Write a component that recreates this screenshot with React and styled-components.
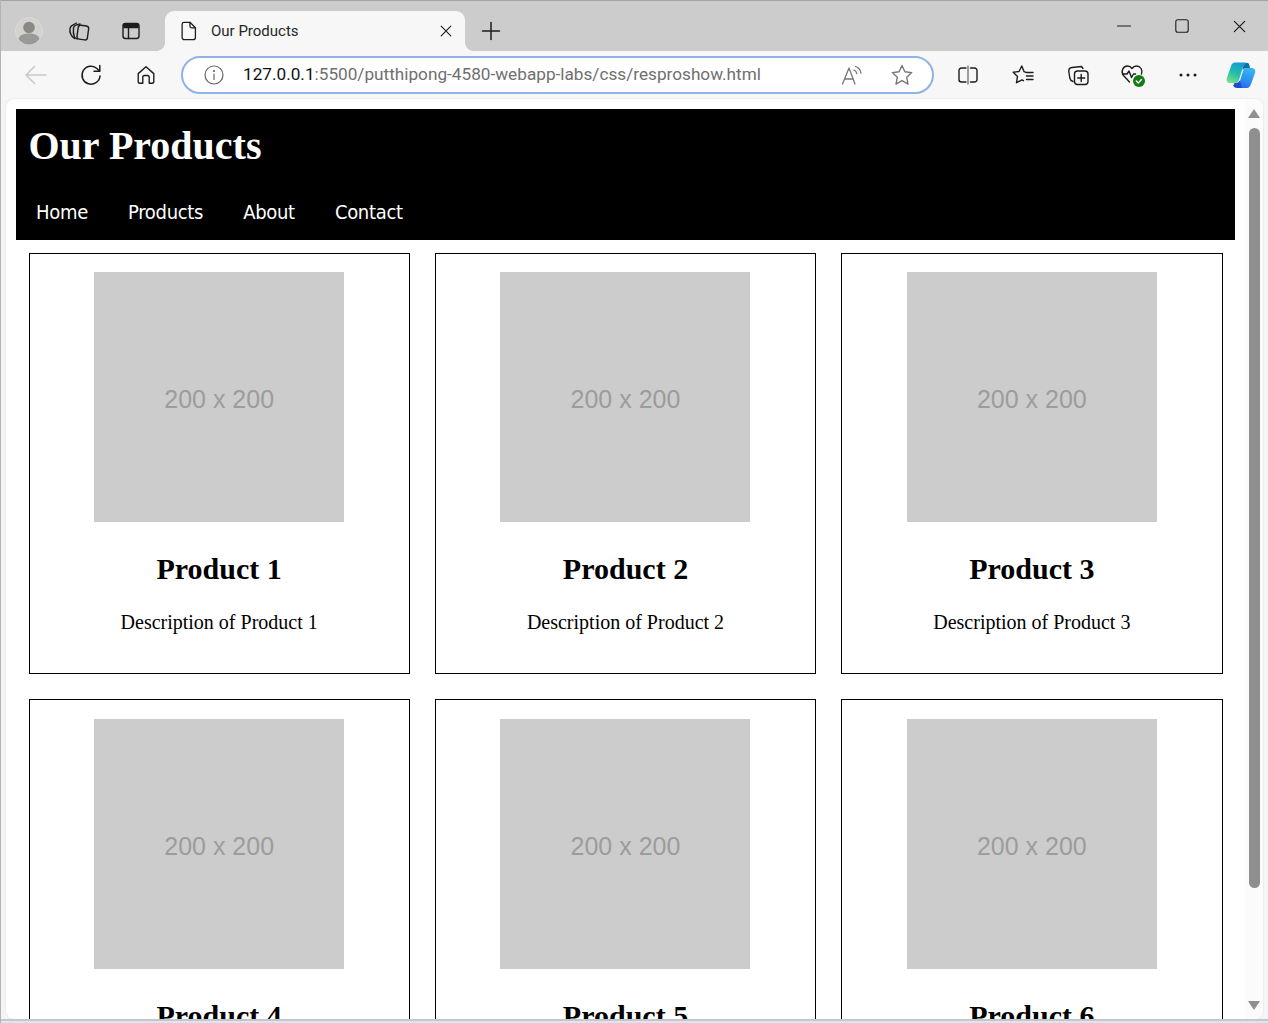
import styled, {createGlobalStyle} from 'styled-components';

const products = [1, 2, 3, 4, 5, 6];
const links = ['Home', 'Products', 'About', 'Contact'];

const GlobalStyle = createGlobalStyle`
    html, body {
        margin: 0;
        padding: 0;
        height: 100%;
        overflow: hidden;
        background: #f7f7f7;
    }
`;

const Browser = styled.div`
    height: 1023px;
    display: flex;
    flex-direction: column;
    overflow: hidden;
    background: #f5f5f5;
    border-left: 1px solid #b4b4b4;
    box-sizing: border-box;
    font-family: Roboto, "Open Sans", sans-serif;
`;

const TabStrip = styled.div`
    height: 51px;
    flex: none;
    box-sizing: border-box;
    margin-left: -1px;
    padding-left: 4px;
    display: flex;
    align-items: flex-end;
    background: #cccccc;
    border-top: 1px solid #a3a3a3;
`;

const StripButton = styled.div`
    width: ${props => props.$w || 50}px;
    height: 40px;
    flex: none;
    margin-left: ${props => props.$ml || 0}px;
    display: flex;
    align-items: center;
    justify-content: center;
    color: #1c1c1c;
`;

const Tab = styled.div`
    position: relative;
    width: 300px;
    height: 40px;
    flex: none;
    margin-left: 8px;
    box-sizing: border-box;
    padding: 0 12px 0 13px;
    display: flex;
    align-items: center;
    background: #f7f7f7;
    border-radius: 9px 9px 0 0;
    color: #1c1c1c;

    &::before, &::after {
        content: '';
        position: absolute;
        bottom: 0;
        width: 8px;
        height: 8px;
    }

    &::before {
        left: -8px;
        background: radial-gradient(circle at 0 0, transparent 7.5px, #f7f7f7 8px);
    }

    &::after {
        right: -8px;
        background: radial-gradient(circle at 100% 0, transparent 7.5px, #f7f7f7 8px);
    }
`;

const TabTitle = styled.span`
    flex: 1;
    margin-left: 11px;
    font-size: 15px;
    color: #262626;
`;

const Spacer = styled.div`
    flex: 1;
`;

const WindowButton = styled.div`
    width: 57.5px;
    height: 50px;
    flex: none;
    align-self: flex-start;
    display: flex;
    align-items: center;
    justify-content: center;
    color: #1c1c1c;
`;

const Toolbar = styled.div`
    height: 48px;
    flex: none;
    box-sizing: border-box;
    padding-left: 7.5px;
    display: flex;
    align-items: center;
    background: #f7f7f7;
`;

const ToolButton = styled.div`
    width: ${props => props.$w || 55}px;
    height: 38px;
    flex: none;
    display: flex;
    align-items: center;
    justify-content: center;
    color: #1c1c1c;
`;

const AddressBar = styled.div`
    width: 753px;
    height: 38px;
    flex: none;
    margin: 0 6.5px 0 7.5px;
    box-sizing: border-box;
    padding: 0 5px 0 21px;
    display: flex;
    align-items: center;
    background: #ffffff;
    border: 2.5px solid #8fb2e8;
    border-radius: 19px;
`;

const Url = styled.span`
    flex: 1;
    margin-left: 19px;
    padding-bottom: 2px;
    font-size: 17.2px;
    white-space: nowrap;
    color: #6f6f6f;
`;

const Host = styled.span`
    color: #111111;
`;

const ViewportFrame = styled.div`
    flex: 1;
    min-height: 0;
    display: flex;
    margin: 0 5px 0 5px;
    overflow: hidden;
    background: #ffffff;
    border-radius: 8px;
    box-shadow: 0 0 2px rgba(0, 0, 0, 0.12);
`;

const Page = styled.main`
    flex: 1;
    min-width: 0;
    overflow: hidden;
    padding: 10px 10px 0;
    color: #000000;
    font-family: "Liberation Serif", "Times New Roman", serif;
`;

const Header = styled.header`
    height: 131px;
    box-sizing: border-box;
    padding: 13.5px 12.5px 0;
    background: #000000;
    color: #ffffff;
`;

const Title = styled.h1`
    margin: 0;
    font-size: 40px;
    line-height: 46px;
    font-weight: 700;
`;

const Nav = styled.nav`
    margin-top: 31px;
    padding-left: 7.5px;
    display: flex;
    gap: 40px;
`;

const NavLink = styled.a`
    font-family: "DejaVu Sans", sans-serif;
    font-stretch: condensed;
    font-size: 20px;
    line-height: 24px;
    letter-spacing: -0.3px;
    color: #ffffff;
`;

const Grid = styled.section`
    display: grid;
    grid-template-columns: repeat(3, 1fr);
    gap: 25px;
    padding: 12.5px;
`;

const Card = styled.article`
    border: 1px solid #000000;
    padding: 18.75px;
    text-align: center;
`;

const Placeholder = styled.div`
    width: 250px;
    height: 250px;
    box-sizing: border-box;
    padding-top: 4.5px;
    margin: 0 auto;
    display: flex;
    align-items: center;
    justify-content: center;
    background: #cccccc;
    color: #9c9c9c;
    font-family: "Liberation Sans", Arial, sans-serif;
    font-size: 25px;
`;

const ProductName = styled.h3`
    margin: 30px 0 25px;
    font-size: 30px;
    line-height: 34px;
    font-weight: 700;
`;

const Description = styled.p`
    margin: 0 0 20px;
    font-size: 20px;
    line-height: 23px;
`;

const Scrollbar = styled.div`
    width: 18px;
    flex: none;
    box-sizing: border-box;
    padding-top: 10px;
    display: flex;
    flex-direction: column;
    align-items: center;
    background: #fbfbfb;
`;

const ArrowUp = styled.div`
    width: 0;
    height: 0;
    border-left: 6px solid transparent;
    border-right: 6px solid transparent;
    border-bottom: 9px solid #8f8f8f;
`;

const ArrowDown = styled(ArrowUp)`
    margin-top: 113px;
    border-bottom: 0;
    border-top: 9px solid #8f8f8f;
`;

const Thumb = styled.div`
    width: 11px;
    height: 760px;
    margin-top: 10px;
    flex: none;
    background: #8f8f8f;
    border-radius: 6px;
`;

const BottomEdge = styled.div`
    height: 4px;
    flex: none;
    margin-left: -1px;
    box-sizing: border-box;
    background: #dbe6f2;
    border-top: 2px solid #c4c6c9;
`;

const Icon = ({size = 24, vb = 24, sw = 1.4, children}) => (
    <svg width={size} height={size} viewBox={`0 0 ${vb} ${vb}`} fill="none" stroke="currentColor" strokeWidth={sw} strokeLinecap="round" strokeLinejoin="round">
        {children}
    </svg>
);

const Avatar = () => (
    <svg width="28" height="28" viewBox="0 0 28 28">
        <circle cx="14" cy="14" r="13.5" fill="#d3d2cf" stroke="#dcdbd8" />
        <circle cx="14" cy="10.5" r="5.8" fill="#8a8885" />
        <path d="M3.5 22c1-4 5-5.5 10.500-5.500S23.500 18 24.500 22c-2.500 3.500-6 5.500-10.500 5.500S6 25.500 3.500 22z" fill="#9b9996" />
    </svg>
);

const CollectionsTab = () => (
    <Icon>
        <rect x="10.500" y="6.500" width="10.500" height="14" rx="2.500" transform="rotate(8 15 14)" />
        <path d="M10 20 7.500 18.500C6.300 15 6 12 6.500 9c.3-1.500 1-2.300 2.500-2.800L13 5" />
        <path d="M7.500 19.500C4 17 2.500 13 3 9.500c.2-1.500 1-2.500 2.300-3.200L9.500 4" />
    </Icon>
);

const TabsView = () => (
    <Icon>
        <rect x="4" y="4.500" width="16" height="15" rx="2.500" />
        <path d="M5 5.500h14v3H5z" fill="currentColor" />
        <path d="M9.500 9v10.500" />
    </Icon>
);

const PageIcon = () => (
    <Icon size={22}>
        <path d="M6.500 2.500h6.500l6 6V19a2.500 2.500 0 0 1-2.500 2.500H7A2.500 2.500 0 0 1 4.500 19V4.500a2 2 0 0 1 2-2z" />
        <path d="M13 2.700V6.500a2 2 0 0 0 2 2h3.800" />
    </Icon>
);

const Close = ({size = 16}) => (
    <Icon size={size} vb={16} sw={1.3}>
        <path d="M2.500 2.500l11 11M13.500 2.500l-11 11" />
    </Icon>
);

const Plus = () => (
    <Icon size={22} vb={22} sw={1.5}>
        <path d="M11 2.500v17M2.500 11h17" />
    </Icon>
);

const Back = () => (
    <svg width="24" height="24" viewBox="0 0 24 24" fill="none" stroke="#c9c9c9" strokeWidth="1.500" strokeLinecap="round" strokeLinejoin="round">
        <path d="M2 12h20M10.500 3.500 2 12l8.500 8.500" />
    </svg>
);

const Refresh = () => (
    <Icon sw={1.500}>
        <path d="M21 13a9 9 0 1 1-2.800-7.300L20.500 8" />
        <path d="M20.800 2.500v5.800h-5.800" />
    </Icon>
);

const Home = () => (
    <Icon size={22} sw={1.5}>
        <path d="M3.500 10.500 12 3l8.500 7.500V19a2 2 0 0 1-2 2h-3v-6.500a2 2 0 0 0-2-2h-3a2 2 0 0 0-2 2V21h-3a2 2 0 0 1-2-2z" />
    </Icon>
);

const Info = () => (
    <svg width="20" height="20" viewBox="0 0 20 20" fill="none" stroke="#666666" strokeWidth="1.200" strokeLinecap="round">
        <circle cx="10" cy="10" r="9" />
        <path d="M10 9v5.500" />
        <circle cx="10" cy="6" r=".5" fill="#666666" />
    </svg>
);

const ReadAloud = () => (
    <svg width="22" height="22" viewBox="0 0 22 22" fill="none" stroke="#777777" strokeWidth="1.300" strokeLinecap="round" strokeLinejoin="round">
        <path d="M1.500 20 8 4l6 16M3.800 15h8.500" />
        <path d="M13 6c1.500.6 2.500 2 2.800 3.500M14.500 2.500c3 1 5 3.500 5.500 6.500" />
    </svg>
);

const Star = ({stroke = 'currentColor'}) => (
    <svg width="24" height="24" viewBox="0 0 24 24" fill="none" stroke={stroke} strokeWidth="1.400" strokeLinejoin="round">
        <path d="M12 2.500l2.900 6.300 6.800.8-5 4.700 1.300 6.800-6-3.400-6 3.400 1.300-6.800-5-4.700 6.800-.8z" />
    </svg>
);

const SplitScreen = () => (
    <Icon>
        <path d="M10 5H5.500A2.500 2.500 0 0 0 3 7.500v9A2.500 2.500 0 0 0 5.500 19H10" />
        <path d="M14.500 5h4A2.500 2.500 0 0 1 21 7.500v9a2.500 2.500 0 0 1-2.500 2.500h-4" />
        <path d="M12 3v18" stroke="#777777" />
    </Icon>
);

const Favorites = () => (
    <Icon>
        <path d="M15 9.300 13 8.600 10.800 3 8 8.500l-5.800.8 4.300 4.200-1 6.200 5.500-2.800 1.500.8" />
        <path d="M15.500 9.500h6.500M15.500 13h6.500M15.500 16.500h6.500" />
    </Icon>
);

const Collections = () => (
    <Icon>
        <rect x="8.500" y="8" width="13.500" height="13.500" rx="3" />
        <path d="M15.200 11.500v7M11.700 15h7" />
        <path d="M17 5.500 15.500 3.500 6 4.500C4 4.800 2.500 6 2.800 8.500l1 6.500c.3 1.500 1.500 3 3.200 3.500" />
    </Icon>
);

const Health = () => (
    <svg width="26" height="26" viewBox="0 0 26 26" fill="none" stroke="#1c1c1c" strokeWidth="1.400" strokeLinecap="round" strokeLinejoin="round">
        <path d="M9.500 20 3.500 13.500C.5 9.500 3 4 7.500 4c2 0 3.500 1 4.500 2.500C13 5 14.500 4 16.500 4c4 0 6.500 4 5 8" />
        <path d="M2.500 12h4.500l2-3 2.500 6.500 2-3.500h2" />
        <circle cx="19" cy="19" r="6" fill="#107c10" stroke="none" />
        <path d="M16.300 19l2 2 3.200-3.500" stroke="#ffffff" strokeWidth="1.500" />
    </svg>
);

const More = () => (
    <svg width="20" height="6" viewBox="0 0 20 6" fill="#1c1c1c">
        <circle cx="3" cy="3" r="1.500" />
        <circle cx="10" cy="3" r="1.500" />
        <circle cx="17" cy="3" r="1.500" />
    </svg>
);

const Copilot = () => (
    <svg width="30" height="28" viewBox="0 0 30 28">
        <defs>
            <linearGradient id="cpLeft" x1=".7" y1="0" x2=".2" y2="1">
                <stop offset="0" stopColor="#1695dc" />
                <stop offset=".55" stopColor="#22bfa8" />
                <stop offset="1" stopColor="#7fdc90" />
            </linearGradient>
            <linearGradient id="cpRight" x1=".7" y1="0" x2=".3" y2="1">
                <stop offset="0" stopColor="#38b4f4" />
                <stop offset=".6" stopColor="#2b8cf2" />
                <stop offset="1" stopColor="#2a62e0" />
            </linearGradient>
        </defs>
        <path d="M9 1.500H19c2 0 3.500 1 4 3l0 .5H20c-2 0-3 1-3.600 2.700L13 19c-.8 2-2 3-4 3H4C1.500 22 0 20 .7 17.500L5 5C5.700 3 7 1.500 9 1.500z" fill="url(#cpLeft)" />
        <path d="M21 27H11c-2 0-3.500-1-4-3h3c2 0 3-1 3.600-2.700L17 10c.5-1.500 1.500-2.700 3-3h5.500C28 7 29.800 9 29.200 11.500L25 23c-.7 2-2 4-4 4z" fill="url(#cpRight)" />
        <path d="M17 6.500c1-3 3-4.500 4.500-4.500 1 0 2 1 2.500 5h-4c-1.500 0-2.500 1-3.500 2.500z" fill="#0e6f9e" />
        <path d="M8.500 22h1.500c1.500 0 2.800-.8 3.600-2.500L16 26.800c-3 .6-7 .4-8.500-2.500z" fill="#1c4fd0" />
    </svg>
);

const App = () => (
    <Browser>
        <GlobalStyle />
        <TabStrip>
            <StripButton><Avatar /></StripButton>
            <StripButton><CollectionsTab /></StripButton>
            <StripButton $w={53}><TabsView /></StripButton>
            <Tab>
                <PageIcon />
                <TabTitle>Our Products</TabTitle>
                <Close size={14} />
            </Tab>
            <StripButton $ml={1}><Plus /></StripButton>
            <Spacer />
            <WindowButton>
                <Icon size={14} vb={14} sw={1.1}><path d="M.5 7h13" /></Icon>
            </WindowButton>
            <WindowButton>
                <Icon size={14} vb={14} sw={1.1}><rect x=".8" y=".8" width="12.400" height="12.400" rx="2" /></Icon>
            </WindowButton>
            <WindowButton>
                <Close size={15} />
            </WindowButton>
        </TabStrip>
        <Toolbar>
            <ToolButton><Back /></ToolButton>
            <ToolButton><Refresh /></ToolButton>
            <ToolButton><Home /></ToolButton>
            <AddressBar>
                <Info />
                <Url><Host>127.0.0.1</Host>:5500/putthipong-4580-webapp-labs/css/resproshow.html</Url>
                <ToolButton $w={50}><ReadAloud /></ToolButton>
                <ToolButton $w={50}><Star stroke="#777777" /></ToolButton>
            </AddressBar>
            <ToolButton><SplitScreen /></ToolButton>
            <ToolButton><Favorites /></ToolButton>
            <ToolButton><Collections /></ToolButton>
            <ToolButton><Health /></ToolButton>
            <ToolButton><More /></ToolButton>
            <ToolButton $w={51}><Copilot /></ToolButton>
        </Toolbar>
        <ViewportFrame>
            <Page>
                <Header>
                    <Title>Our Products</Title>
                    <Nav>
                        {links.map(link => <NavLink key={link}>{link}</NavLink>)}
                    </Nav>
                </Header>
                <Grid>
                    {products.map(n => (
                        <Card key={n}>
                            <Placeholder>200 x 200</Placeholder>
                            <ProductName>Product {n}</ProductName>
                            <Description>Description of Product {n}</Description>
                        </Card>
                    ))}
                </Grid>
            </Page>
            <Scrollbar>
                <ArrowUp />
                <Thumb />
                <ArrowDown />
            </Scrollbar>
        </ViewportFrame>
        <BottomEdge />
    </Browser>
);

export default App;
